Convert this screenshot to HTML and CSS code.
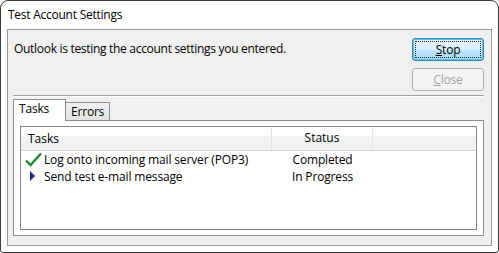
FILE: index.html
```html
<!DOCTYPE html>
<html>
<head>
<meta charset="utf-8">
<link rel="stylesheet" href="styles.css">
</head>
<body>
<div class="window">
  <div class="titlebar">Test Account Settings</div>
  <div class="panel">
    <div class="top">
      <div class="message">Outlook is testing the account settings you entered.</div>
      <div class="buttons">
        <div class="btn btn-default"><span class="focus"><u>S</u>top</span></div>
        <div class="btn btn-disabled"><u>C</u>lose</div>
      </div>
    </div>
    <div class="separator"></div>
    <div class="tabs">
      <div class="tab tab-active">Tasks</div>
      <div class="tab">Errors</div>
    </div>
    <div class="tabpanel">
      <div class="list">
        <div class="list-head">
          <div class="col col-task">Tasks</div>
          <div class="col col-status">Status</div>
          <div class="col col-rest"></div>
        </div>
        <div class="row">
          <div class="col col-task">
            <svg class="icon" width="17" height="15" viewBox="0 0 17 15"><path d="M1 8.5 L5.5 13 L16 1.5" fill="none" stroke="#1f8a2e" stroke-width="2.4" stroke-linejoin="miter"/></svg>
            <span>Log onto incoming mail server (POP3)</span>
          </div>
          <div class="col col-status">Completed</div>
        </div>
        <div class="row">
          <div class="col col-task">
            <svg class="icon" width="17" height="15" viewBox="0 0 17 15"><path d="M5 2 L10 7 L5 12 Z" fill="#1c2b8f"/></svg>
            <span>Send test e-mail message</span>
          </div>
          <div class="col col-status">In Progress</div>
        </div>
      </div>
    </div>
  </div>
</div>
</body>
</html>
```

FILE: styles.css
```css
html, body {
  margin: 0;
  padding: 0;
  background: #ffffff;
}
body {
  font-family: "Open Sans", "Noto Sans", "Liberation Sans", sans-serif;
  font-size: 12px;
  color: #000;
}
.window {
  width: 499px;
  height: 253px;
  box-sizing: border-box;
  border: 1px solid #3b3b3b;
  border-radius: 8px 8px 3px 3px;
  background: #ffffff;
  padding: 0 6px 6px 6px;
  display: flex;
  flex-direction: column;
}
.titlebar {
  height: 28px;
  line-height: 28px;
  padding-left: 1px;
  letter-spacing: -0.25px;
}
.panel {
  flex: 1;
  border: 1px solid #9a9a9a;
  background: #f0f0f0;
  padding: 0 7px 9px 5px;
  display: flex;
  flex-direction: column;
}
.top {
  display: flex;
  justify-content: space-between;
  padding-top: 8px;
}
.message {
  padding-left: 1px;
  padding-top: 2px;
  letter-spacing: -0.3px;
}
.buttons {
  display: flex;
  flex-direction: column;
  gap: 7px;
}
.btn {
  width: 72px;
  height: 23px;
  box-sizing: border-box;
  border-radius: 3px;
  display: flex;
  align-items: center;
  justify-content: center;
  letter-spacing: -0.2px;
}
.btn-default {
  border: 1px solid #3c7fb1;
  background: linear-gradient(#eaf6fd 0%, #d9f0fc 50%, #bee6fd 51%, #a7d9f5 100%);
  box-shadow: inset 0 0 0 1px #58c6f2;
  padding: 2px;
}
.btn-default .focus {
  flex: 1;
  align-self: stretch;
  border: 1px dotted #222;
  display: flex;
  align-items: center;
  justify-content: center;
}
.btn-disabled {
  border: 1px solid #adb2b5;
  background: #f4f4f4;
  color: #a0a0a0;
}
.separator {
  height: 0;
  border-top: 1px solid #a0a0a0;
  border-bottom: 1px solid #ffffff;
  margin-top: 4px;
}
.tabs {
  display: flex;
  align-items: flex-end;
  margin-top: 2px;
  height: 21px;
  position: relative;
  z-index: 1;
}
.tab {
  height: 18px;
  box-sizing: border-box;
  border: 1px solid #898c95;
  border-bottom: none;
  padding: 0 5px;
  line-height: 18px;
  background: linear-gradient(#f2f2f2, #e3e3e3);
  margin-left: -1px;
  letter-spacing: -0.2px;
}
.tab-active {
  margin-left: 0;
  background: #ffffff;
  width: 53px;
  padding: 0 5px;
  line-height: 17px;
  margin-bottom: -1px;
  height: 22px;
  position: relative;
  z-index: 2;
}
.tabpanel {
  flex: 1;
  border: 1px solid #898c95;
  background: #ffffff;
  padding: 5px 6px;
  display: flex;
}
.list {
  flex: 1;
  border: 1px solid #828790;
  background: #ffffff;
}
.list-head {
  display: flex;
  height: 23px;
  background: linear-gradient(#ffffff 0%, #ffffff 40%, #f3f4f6 41%, #eef0f2 100%);
  border-bottom: 1px solid #d5d5d5;
}
.list-head .col {
  line-height: 22px;
  border-right: 1px solid #e3e4e6;
}
.list-head .col-rest {
  width: 103px;
  border-right: none;
}
.col-task {
  width: 243px;
  padding-left: 7px;
  box-sizing: border-box;
  display: flex;
  align-items: center;
}
.col-status {
  width: 101px;
  text-align: center;
  box-sizing: border-box;
}
.list-head .col-task { width: 251px; }
.row {
  display: flex;
  height: 17px;
  line-height: 17px;
  letter-spacing: -0.15px;
}
.row .col-task {
  padding-left: 4px;
  width: 251px;
}
.row .col-status {
  width: 101px;
}
.icon {
  flex: none;
  margin-right: 2px;
}
```
